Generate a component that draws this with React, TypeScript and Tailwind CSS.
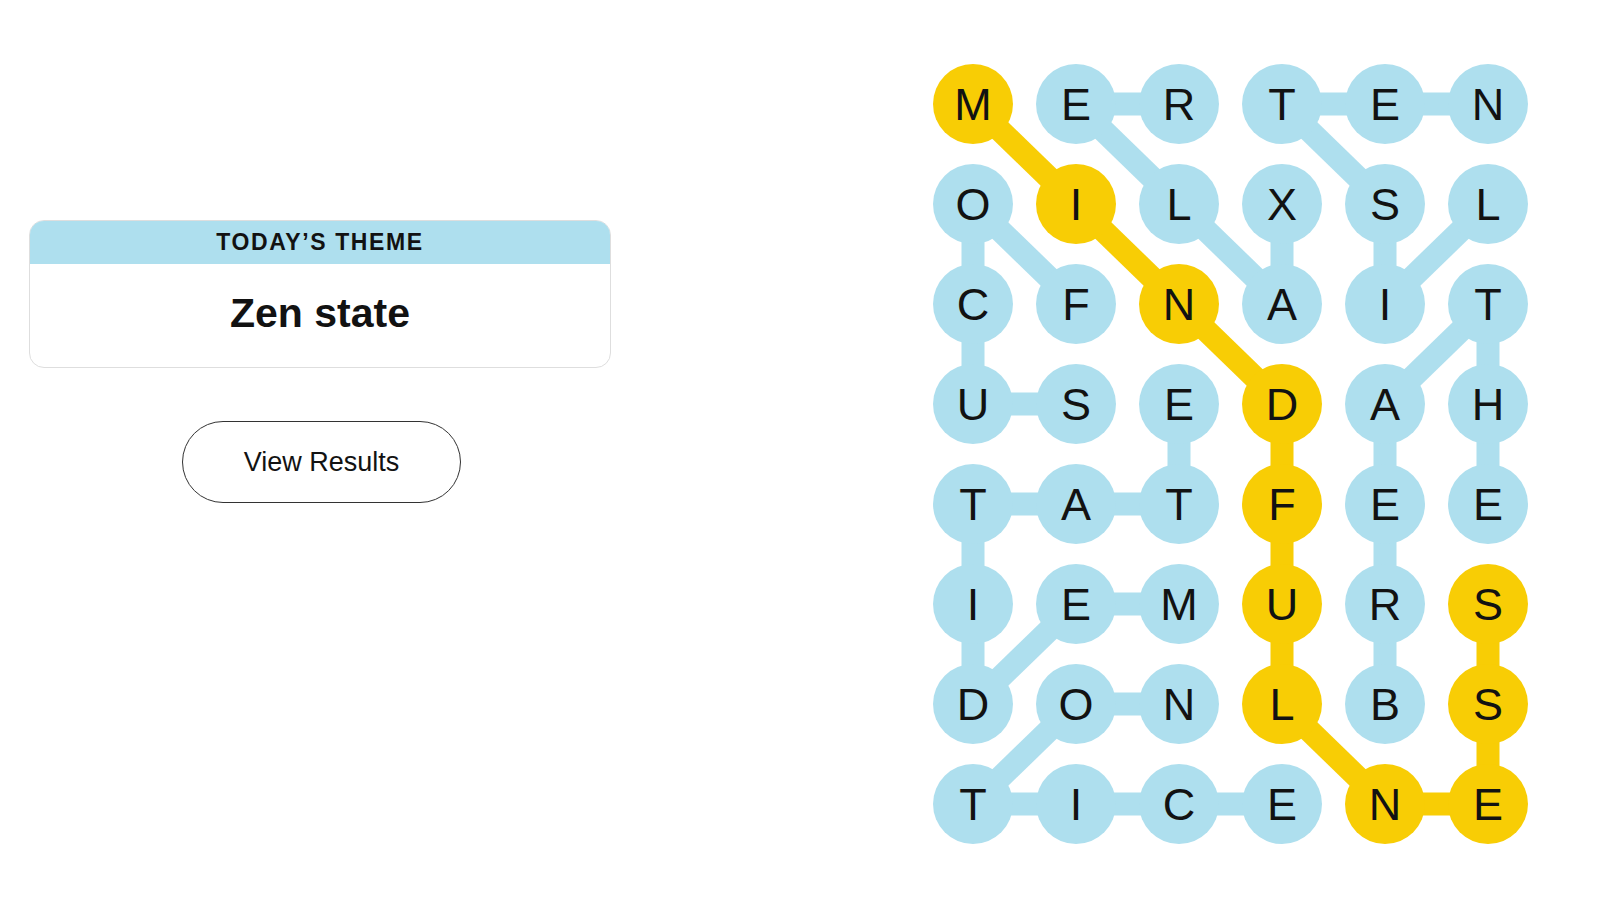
import React from 'react';

const BLUE = '#aedfee';
const YELLOW = '#f8cd05';

const GRID = [
  'MERTEN',
  'OILXSL',
  'CFNAIT',
  'USEDAH',
  'TATFEE',
  'IEMURS',
  'DONLBS',
  'TICENE',
];

type Cell = [number, number];

// found words, as paths through [row, col]
const WORDS: { path: Cell[]; spangram?: boolean }[] = [
  { path: [[0, 0], [1, 1], [2, 2], [3, 3], [4, 3], [5, 3], [6, 3], [7, 4], [7, 5], [6, 5], [5, 5]], spangram: true },
  { path: [[0, 2], [0, 1], [1, 2], [2, 3], [1, 3]] },
  { path: [[1, 5], [2, 4], [1, 4], [0, 3], [0, 4], [0, 5]] },
  { path: [[2, 1], [1, 0], [2, 0], [3, 0], [3, 1]] },
  { path: [[6, 4], [5, 4], [4, 4], [3, 4], [2, 5], [3, 5], [4, 5]] },
  { path: [[5, 2], [5, 1], [6, 0], [5, 0], [4, 0], [4, 1], [4, 2], [3, 2]] },
  { path: [[6, 2], [6, 1], [7, 0], [7, 1], [7, 2], [7, 3]] },
];

const CELL = 80;
const COL_STEP = 103;
const ROW_STEP = 100;

const cx = (c: number) => CELL / 2 + c * COL_STEP;
const cy = (r: number) => CELL / 2 + r * ROW_STEP;

const spangramCells = new Set(
  WORDS.filter(w => w.spangram).flatMap(w => w.path.map(([r, c]) => `${r}-${c}`))
);

function Board() {
  return (
    <div className="relative">
      {/* connectors behind the letters */}
      <svg className="absolute inset-0" width={5 * COL_STEP + CELL} height={7 * ROW_STEP + CELL}>
        {WORDS.map((w, wi) =>
          w.path.slice(1).map(([r, c], i) => {
            const [pr, pc] = w.path[i];
            return (
              <line
                key={`${wi}-${i}`}
                x1={cx(pc)}
                y1={cy(pr)}
                x2={cx(c)}
                y2={cy(r)}
                stroke={w.spangram ? YELLOW : BLUE}
                strokeWidth={23}
              />
            );
          })
        )}
      </svg>
      <div className="relative grid grid-cols-[repeat(6,80px)] gap-x-[23px] gap-y-[20px]">
        {GRID.map((row, r) =>
          row.split('').map((ch, c) => (
            <div
              key={`${r}-${c}`}
              className={`w-[80px] h-[80px] rounded-full flex items-center justify-center text-[45px] leading-none text-[#121212] ${
                spangramCells.has(`${r}-${c}`) ? 'bg-[#f8cd05]' : 'bg-[#aedfee]'
              }`}
            >
              {ch}
            </div>
          ))
        )}
      </div>
    </div>
  );
}

export default function App() {
  return (
    <div className="w-full h-[900px] bg-white flex items-start font-['Liberation_Sans',Arial,sans-serif]">
      {/* THEME + RESULTS */}
      <div className="pl-[29px] pt-[220px] w-[611px] shrink-0 flex flex-col">
        <div className="w-[582px] rounded-[15px] border border-[#dedede] overflow-hidden bg-white">
          <div className="h-[43px] bg-[#aedfee] flex items-center justify-center">
            <span className="text-[23px] font-bold tracking-[1.6px] text-[#121212]">TODAY’S THEME</span>
          </div>
          <div className="h-[103px] flex items-center justify-center pb-[4px]">
            <span className="text-[41px] font-bold text-[#121212]">Zen state</span>
          </div>
        </div>
        <button className="mt-[53px] self-center ml-[3px] w-[279px] h-[82px] rounded-full border-[1.5px] border-[#333] bg-white text-[27px] text-[#121212]">
          View Results
        </button>
      </div>

      {/* BOARD */}
      <div className="ml-[322px] mt-[64px]">
        <Board />
      </div>
    </div>
  );
}
